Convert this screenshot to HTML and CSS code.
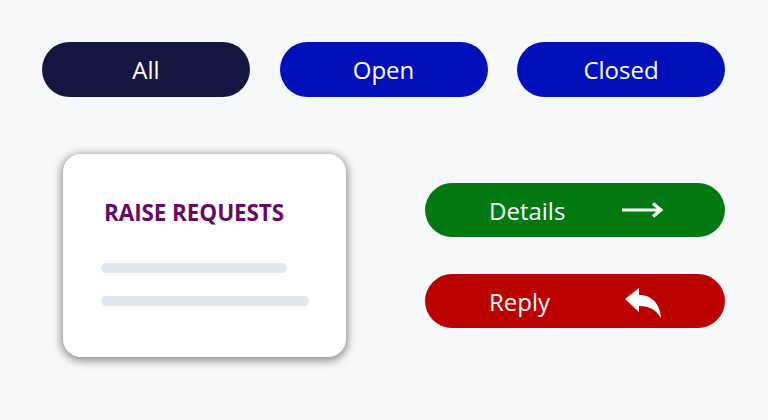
FILE: index.html
```html
<!DOCTYPE html>
<html>
<head>
<meta charset="utf-8">
<link rel="stylesheet" href="styles.css">
</head>
<body>
<div class="page">
  <div class="tabs">
    <div class="pill pill-dark">All</div>
    <div class="pill pill-blue">Open</div>
    <div class="pill pill-blue">Closed</div>
  </div>
  <div class="lower">
    <div class="card">
      <div class="card-title">RAISE REQUESTS</div>
      <div class="bar bar-short"></div>
      <div class="bar bar-long"></div>
    </div>
    <div class="actions">
      <div class="action action-green">
        <span class="action-label">Details</span>
        <svg class="icon-arrow" width="42" height="16" viewBox="0 0 42 16">
          <path d="M0 8 H38" stroke="#fff" stroke-width="3.2" fill="none"/>
          <path d="M31 1.5 L39 8 L31 14.5" stroke="#fff" stroke-width="3.2" fill="none" stroke-linejoin="miter"/>
        </svg>
      </div>
      <div class="action action-red">
        <span class="action-label">Reply</span>
        <svg class="icon-reply" width="36" height="30" viewBox="0 0 36 30">
          <path d="M0 11 L14 0 L14 7 C25 7 35 14 36 30 C31 22 25 18 14 18 L14 24 Z" fill="#fff"/>
        </svg>
      </div>
    </div>
  </div>
</div>
</body>
</html>
```

FILE: styles.css
```css
html, body {
  margin: 0;
  padding: 0;
  background: #f7f8fa;
}
body {
  font-family: "Open Sans", "Noto Sans", sans-serif;
  width: 768px;
  height: 420px;
  overflow: hidden;
}
.page {
  padding: 42px 0 0 42px;
}
.tabs {
  display: flex;
  gap: 29.5px;
}
.pill {
  width: 208px;
  height: 55px;
  border-radius: 28px;
  display: flex;
  align-items: center;
  justify-content: center;
  color: #fff;
  font-size: 24px;
}
.pill-dark { background: #141642; }
.pill-blue { background: #0011bb; }
.lower {
  display: flex;
  margin-top: 57px;
}
.card {
  margin-left: 21px;
  width: 283px;
  height: 203px;
  box-sizing: border-box;
  background: #fff;
  border-radius: 18px;
  box-shadow: 0 2px 10px 1px rgba(0,0,0,0.5);
  padding: 45px 0 0 38px;
}
.card-title {
  color: #6b0a63;
  font-weight: 700;
  font-size: 22.5px;
  line-height: 28px;
  margin-left: 3px;
  letter-spacing: -0.1px;
}
.bar {
  height: 10px;
  border-radius: 5px;
  background: #e1e7ef;
}
.bar-short { width: 186px; margin-top: 36px; }
.bar-long { width: 208px; margin-top: 23px; }
.actions {
  margin-left: 79px;
  margin-top: 29px;
  display: flex;
  flex-direction: column;
  gap: 37px;
}
.action {
  width: 300px;
  height: 54px;
  border-radius: 27px;
  display: flex;
  align-items: center;
  color: #fff;
  font-size: 24px;
  box-sizing: border-box;
  padding-left: 64px;
}
.action-green { background: #007a10; }
.action-red { background: #bb0000; }
.action-label { width: 133px; }
.icon-reply { margin-left: 3px; margin-top: 4px; }
```
